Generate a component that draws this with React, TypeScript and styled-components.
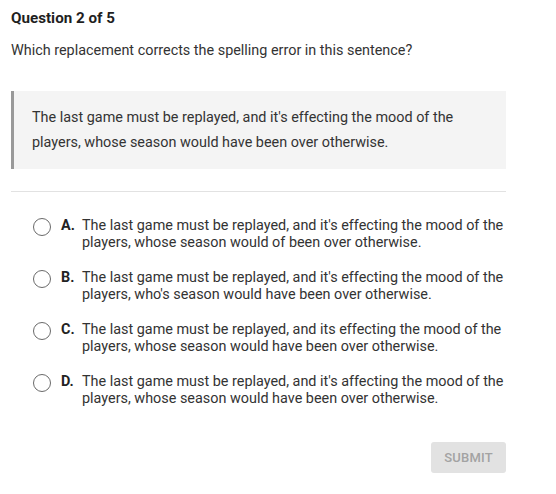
import styled, { createGlobalStyle } from 'styled-components'

const GlobalStyle = createGlobalStyle`
    body {
        margin: 0;
        background: #fff;
        font-family: Roboto, "Liberation Sans", Arial, sans-serif;
        color: #333;
    }
`

const Page = styled.div`
    width: 495px;
    padding: 8px 11px 0;
`

const Title = styled.h2`
    margin: 0;
    font-size: 15.2px;
    line-height: 20px;
    font-weight: 700;
    color: #1f1f1f;
`

const Prompt = styled.p`
    margin: 13px 0 0;
    font-size: 14.4px;
    line-height: 20px;
    color: #333;
`

const Quote = styled.blockquote`
    margin: 30px 0 0;
    padding: 14px 18px;
    background: #f4f4f4;
    border-left: 3px solid #999;
    font-size: 14.4px;
    line-height: 25px;
    color: #333;
`

const Divider = styled.hr`
    margin: 22px 0 0;
    border: none;
    border-top: 1px solid #e2e2e2;
`

const OptionList = styled.div`
    display: flex;
    flex-direction: column;
    gap: 18px;
    margin-top: 25px;
`

const Option = styled.label`
    display: flex;
    align-items: flex-start;
    padding-left: 22px;
    font-size: 14.4px;
    line-height: 17px;
    color: #333;
    cursor: pointer;
`

const Radio = styled.span`
    flex: none;
    width: 16px;
    height: 16px;
    margin-top: 1px;
    border: 1px solid #6a6a6a;
    border-radius: 50%;
    background: #fff;
`

const Letter = styled.span`
    flex: none;
    width: 21px;
    margin-left: 10px;
    font-weight: 700;
    color: #222;
`

const OptionText = styled.span`
    flex: 1;
`

const Footer = styled.div`
    display: flex;
    justify-content: flex-end;
    margin-top: 35px;
`

const SubmitButton = styled.button`
    width: 75px;
    height: 31px;
    border: none;
    border-radius: 3px;
    background: #e2e2e2;
    color: #a3a3a3;
    font-family: Roboto, "Liberation Sans", Arial, sans-serif;
    font-size: 13px;
    font-weight: 500;
    letter-spacing: 0.2px;
`

const options = [
    { letter: 'A.', text: "The last game must be replayed, and it's effecting the mood of the players, whose season would of been over otherwise." },
    { letter: 'B.', text: "The last game must be replayed, and it's effecting the mood of the players, who's season would have been over otherwise." },
    { letter: 'C.', text: 'The last game must be replayed, and its effecting the mood of the players, whose season would have been over otherwise.' },
    { letter: 'D.', text: "The last game must be replayed, and it's affecting the mood of the players, whose season would have been over otherwise." },
]

export default function App() {
    return (
        <>
            <GlobalStyle />
            <Page>
                <Title>Question 2 of 5</Title>
                <Prompt>Which replacement corrects the spelling error in this sentence?</Prompt>
                <Quote>
                    The last game must be replayed, and it's effecting the mood of the players, whose season would have been over otherwise.
                </Quote>
                <Divider />
                <OptionList>
                    {options.map(o => (
                        <Option key={o.letter}>
                            <Radio />
                            <Letter>{o.letter}</Letter>
                            <OptionText>{o.text}</OptionText>
                        </Option>
                    ))}
                </OptionList>
                <Footer>
                    <SubmitButton disabled>SUBMIT</SubmitButton>
                </Footer>
            </Page>
        </>
    )
}
